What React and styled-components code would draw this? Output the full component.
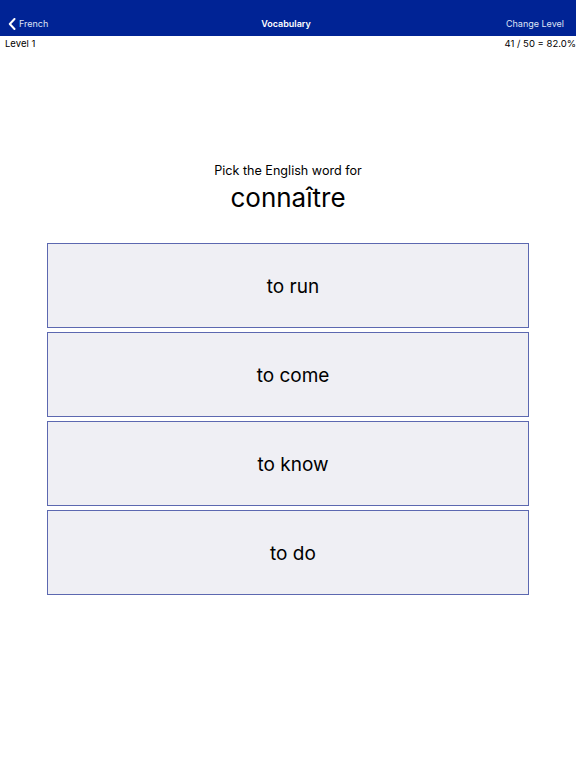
import React from "react";
import styled, { createGlobalStyle } from "styled-components";

const Global = createGlobalStyle`
  html, body { margin: 0; padding: 0; background: #fff; }
  body { font-family: Inter, "Liberation Sans", Arial, sans-serif; color: #000; }
`;

const Page = styled.div`
  width: 576px;
  min-height: 768px;
  display: flex;
  flex-direction: column;
`;

const NavBar = styled.header`
  height: 36px;
  background: #002395;
  display: grid;
  grid-template-columns: 1fr auto 1fr;
  align-items: center;
  padding: 11px 12px 0 8px;
  box-sizing: border-box;
  color: #fff;
  font-size: 9px;
`;

const Back = styled.div`
  display: flex;
  align-items: center;
  gap: 3px;
  color: #dfe4f5;
`;

const Title = styled.div`
  font-weight: 600;
`;

const Right = styled.div`
  justify-self: end;
  color: #dfe4f5;
`;

const StatusRow = styled.div`
  display: flex;
  justify-content: space-between;
  padding: 1px 0 0 5px;
  font-size: 9.5px;
  line-height: 13px;
`;

const Prompt = styled.div`
  margin-top: 113px;
  text-align: center;
  font-size: 12.6px;
  line-height: 16px;
`;

const Word = styled.div`
  text-align: center;
  font-size: 26px;
  line-height: 30px;
  margin-top: 4px;
`;

const Choices = styled.div`
  margin: 30px 47px 0 47px;
  display: flex;
  flex-direction: column;
  gap: 4px;
`;

const Choice = styled.button`
  height: 85px;
  background: #efeff4;
  border: 1px solid #5c68b0;
  font-family: inherit;
  font-size: 19px;
  color: #000;
  display: flex;
  align-items: center;
  justify-content: center;
  padding: 2px 0 0 10px;
`;

export default function App() {
  const options = ["to run", "to come", "to know", "to do"];
  return (
    <Page>
      <Global />
      <NavBar>
        <Back>
          <svg width="8" height="12" viewBox="0 0 8 12">
            <path d="M6.5 1 L1.8 6 L6.5 11" stroke="#fff" strokeWidth="2" fill="none" strokeLinecap="round" strokeLinejoin="round" />
          </svg>
          French
        </Back>
        <Title>Vocabulary</Title>
        <Right>Change Level</Right>
      </NavBar>
      <StatusRow>
        <span>Level 1</span>
        <span>41 / 50 = 82.0%</span>
      </StatusRow>
      <Prompt>Pick the English word for</Prompt>
      <Word>connaître</Word>
      <Choices>
        {options.map((o) => (
          <Choice key={o}>{o}</Choice>
        ))}
      </Choices>
    </Page>
  );
}
